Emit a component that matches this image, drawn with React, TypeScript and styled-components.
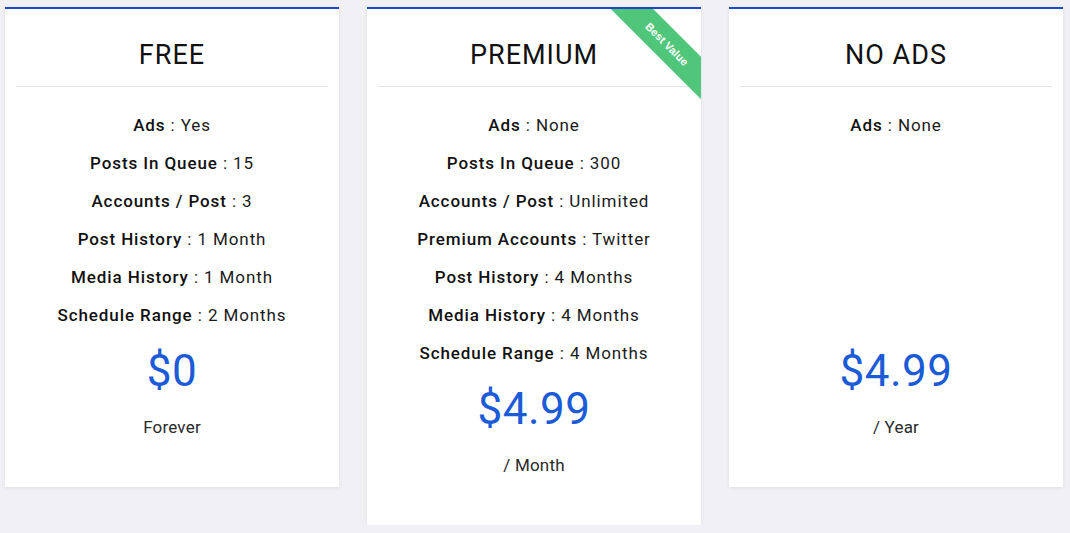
import React from "react";
import styled, { createGlobalStyle } from "styled-components";

const Global = createGlobalStyle`
  html, body { margin: 0; padding: 0; background: #f0f0f5; }
  body { font-family: Roboto, "Liberation Sans", sans-serif; }
`;

const Page = styled.div`
  display: grid;
  grid-template-columns: repeat(3, 334px);
  column-gap: 28px;
  align-items: start;
  padding: 7px 0 0 5px;
`;

const Card = styled.div`
  position: relative;
  background: #fff;
  border-top: 2px solid #1e48c9;
  box-shadow: 0 1px 4px rgba(0, 0, 0, 0.08);
  text-align: center;
  padding-bottom: 48px;
`;

const Header = styled.div`
  margin: 0 11px;
  padding: 29px 0 14px;
  border-bottom: 1px solid #e4e4e4;
`;

const Title = styled.h2`
  margin: 0;
  font-size: 27px;
  line-height: 34px;
  font-weight: 400;
  letter-spacing: 1px;
  color: #111;
`;

const Features = styled.div`
  padding-top: 19px;
  min-height: 228px;
`;

const Row = styled.div`
  font-size: 17px;
  line-height: 38px;
  letter-spacing: 0.9px;
  color: #1a1a1a;
`;

const Key = styled.span`
  font-weight: 500;
  color: #111;
`;

const Price = styled.div`
  margin-top: 9px;
  font-size: 44px;
  line-height: 56px;
  font-weight: 400;
  color: #1b5bd7;
  letter-spacing: 0.5px;
`;

const Period = styled.div`
  margin-top: 16px;
  font-size: 17px;
  line-height: 24px;
  letter-spacing: 0.2px;
  color: #2a2a2a;
`;

const Corner = styled.div`
  position: absolute;
  top: 0;
  right: 0;
  width: 90px;
  height: 90px;
  overflow: hidden;
`;

const Ribbon = styled.div`
  position: absolute;
  left: -9.5px;
  top: 19.5px;
  width: 130px;
  height: 30px;
  line-height: 30px;
  transform: rotate(45deg);
  background: #50c67a;
  color: #fff;
  font-family: "Liberation Sans", Arial, sans-serif;
  font-size: 11px;
  font-weight: 700;
  text-align: center;
`;

type Plan = {
  title: string;
  features: [string, string][];
  price: string;
  period: string;
  ribbon?: string;
};

const plans: Plan[] = [
  {
    title: "FREE",
    features: [
      ["Ads", "Yes"],
      ["Posts In Queue", "15"],
      ["Accounts / Post", "3"],
      ["Post History", "1 Month"],
      ["Media History", "1 Month"],
      ["Schedule Range", "2 Months"],
    ],
    price: "$0",
    period: "Forever",
  },
  {
    title: "PREMIUM",
    ribbon: "Best Value",
    features: [
      ["Ads", "None"],
      ["Posts In Queue", "300"],
      ["Accounts / Post", "Unlimited"],
      ["Premium Accounts", "Twitter"],
      ["Post History", "4 Months"],
      ["Media History", "4 Months"],
      ["Schedule Range", "4 Months"],
    ],
    price: "$4.99",
    period: "/ Month",
  },
  {
    title: "NO ADS",
    features: [["Ads", "None"]],
    price: "$4.99",
    period: "/ Year",
  },
];

export default function App() {
  return (
    <>
      <Global />
      <Page>
        {plans.map((p) => (
          <Card key={p.title}>
            {p.ribbon && (
              <Corner>
                <Ribbon>{p.ribbon}</Ribbon>
              </Corner>
            )}
            <Header>
              <Title>{p.title}</Title>
            </Header>
            <Features>
              {p.features.map(([k, v]) => (
                <Row key={k}>
                  <Key>{k}</Key> : {v}
                </Row>
              ))}
            </Features>
            <Price>{p.price}</Price>
            <Period>{p.period}</Period>
          </Card>
        ))}
      </Page>
    </>
  );
}
